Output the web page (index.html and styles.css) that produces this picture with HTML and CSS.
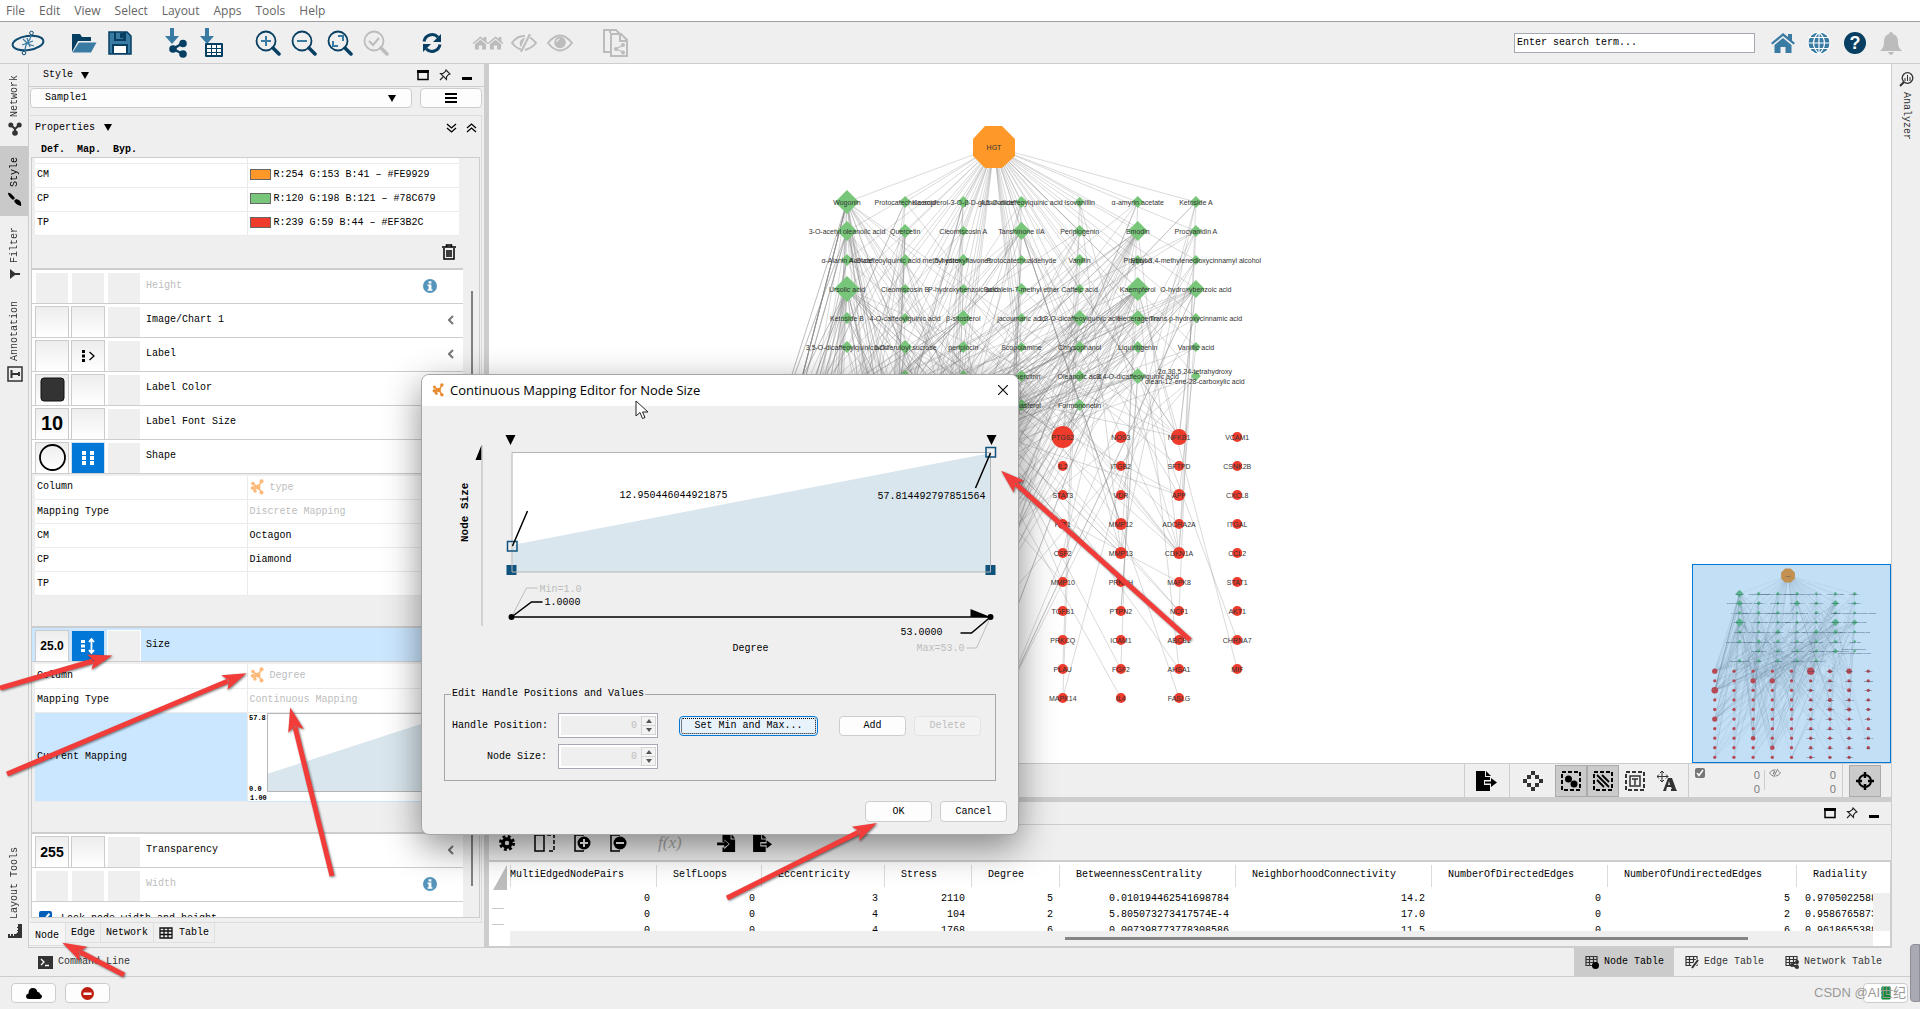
FILE: index.html
```html
<!DOCTYPE html>
<html lang="en">
<head>
<meta charset="utf-8">
<title>Cytoscape</title>
<link rel="stylesheet" href="styles.css">
</head>
<body>
<svg class="defs" aria-hidden="true">
  <symbol id="i-logo" viewBox="0 0 34 26"><ellipse cx="17" cy="13" rx="15.500" ry="7" fill="none" stroke="#0f4a70" stroke-width="2" transform="rotate(-8 17 13)"/><path d="M13 24l2-9 4-6 2-7M12 9l5 5 6 2M11 15l11-4M16 8l3 9" fill="none" stroke="#3a7ba3" stroke-width="1.300"/><circle cx="20.500" cy="3" r="1.800" fill="#efefef" stroke="#0f4a70"/><circle cx="13" cy="23" r="1.800" fill="#efefef" stroke="#0f4a70"/></symbol>
  <symbol id="i-folder" viewBox="0 0 26 22"><path d="M1 2h8l2 3h9v4H7l-6 11z" fill="#073f63"/><path d="M8 10.500h17.500L20 20.500H1.500z" fill="#3a7ba3"/></symbol>
  <symbol id="i-save" viewBox="0 0 24 24"><path d="M1 1h18l4 4v18H1z" fill="#3a7ba3"/><path d="M6 1h12v9H6z" fill="#073f63"/><path d="M8 1h7v7H8z" fill="#3a7ba3"/><path d="M12 2h3v5h-3z" fill="#073f63"/><path d="M4 13h16v10H4z" fill="#073f63"/><path d="M6 15h12v7H6z" fill="#fff"/><path d="M1 1h18l4 4v18H1z" fill="none" stroke="#073f63" stroke-width="1.500"/></symbol>
  <symbol id="i-impnet" viewBox="0 0 24 30"><path d="M6 0h4v8h5l-7 8-7-8h5z" fill="#3a7ba3"/><path d="M19 15L9 21l10 5" stroke="#073f63" stroke-width="2.500" fill="none"/><circle cx="19" cy="15.500" r="3.800" fill="#073f63"/><circle cx="9" cy="21" r="3.800" fill="#073f63"/><circle cx="19" cy="26" r="3.800" fill="#073f63"/></symbol>
  <symbol id="i-imptab" viewBox="0 0 24 30"><path d="M5 0h4v8h5l-7 8-7-8h5z" fill="#3a7ba3"/><rect x="5" y="15" width="18" height="14" rx="1" fill="#073f63"/><path d="M7 17h4v3H7zM12 17h4v3h-4zM17 17h4v3h-4zM7 21h4v3H7zM12 21h4v3h-4zM17 21h4v3h-4zM7 25h4v2H7zM12 25h4v2h-4zM17 25h4v2h-4z" fill="#fff"/></symbol>
  <symbol id="i-lens" viewBox="0 0 26 26"><circle cx="11" cy="11" r="9.500" fill="none" stroke="currentColor" stroke-width="1.800"/><path d="M18 18l6 6" stroke="currentColor" stroke-width="3.500" stroke-linecap="round"/></symbol>
  <symbol id="i-refresh" viewBox="0 0 20 20"><path d="M2 8.500A8.200 8.200 0 0 1 16 4.200M18 11.500A8.200 8.200 0 0 1 4 15.800" fill="none" stroke="#073f63" stroke-width="3"/><path d="M19 1v8h-8zM1 19v-8h8z" fill="#073f63"/></symbol>
  <symbol id="i-home" viewBox="0 0 26 22"><path d="M13 1l-12 10 1.500 1.500L13 4l10.500 8.500L25 11l-3-2.500V2h-4v3z" fill="currentColor"/><path d="M13 6l8.500 7v8h-6v-6h-5v6h-6v-8z" fill="currentColor"/></symbol>
  <symbol id="i-eye" viewBox="0 0 26 18"><path d="M1 9Q13-6 25 9Q13 24 1 9z" fill="none" stroke="currentColor" stroke-width="2"/><circle cx="13" cy="8.500" r="5.800" fill="currentColor"/><path d="M9.500 8a4 4 0 0 1 3-3" stroke="#efefef" fill="none" stroke-width="1.200"/></symbol>
  <symbol id="i-eyeoff" viewBox="0 0 26 18"><path d="M10 15.500Q5 14 1 9Q6 1.500 14 2M19 3.500q3 2 6 5.500q-4 5-11 7" fill="none" stroke="currentColor" stroke-width="2"/><path d="M14 4a5.500 5.500 0 0 0-4 9z" fill="currentColor"/><path d="M19 0L10 18" stroke="currentColor" stroke-width="2"/></symbol>
  <symbol id="i-copy" viewBox="0 0 26 28"><path d="M7 4V1H1v22h6M7 1h6l5 5" fill="none" stroke="currentColor" stroke-width="2"/><path d="M8 5h10l6 6v16H8z" fill="none" stroke="currentColor" stroke-width="2"/><path d="M17 5v7h7" fill="none" stroke="currentColor" stroke-width="2"/><path d="M20 16l-7 4 7 3" fill="none" stroke="currentColor" stroke-width="1.300"/><circle cx="20" cy="16" r="2" fill="currentColor"/><circle cx="13" cy="20" r="2" fill="currentColor"/><circle cx="20" cy="23.500" r="2" fill="currentColor"/></symbol>
  <symbol id="i-globe" viewBox="0 0 24 24"><circle cx="12" cy="12" r="11.500" fill="#fff"/><circle cx="12" cy="12" r="10.500" fill="#3a7ba3"/><path d="M12 1v22M1 12h22M3 6.500h18M3 17.500h18M12 1q-11 11 0 22q11-11 0-22" stroke="#fff" stroke-width="1.200" fill="none"/></symbol>
  <symbol id="i-bell" viewBox="0 0 24 24"><path d="M12 1q2 0 2 2q5 1 5 8q0 6 4 9H1q4-3 4-9q0-7 5-8q0-2 2-2z" fill="#bcbcbc"/><path d="M9 21h6q-1 3-3 3t-3-3" fill="#bcbcbc"/></symbol>
  <symbol id="i-float" viewBox="0 0 12 12"><path d="M1 2.500h10v8H1z" fill="none" stroke="#000" stroke-width="1.500"/><path d="M0 1h12v3H0z"/></symbol>
  <symbol id="i-pin" viewBox="0 0 12 12"><path d="M7 1l4 4-1.500.5-2 2.500v2.500l-6-6H4L6.500 2.500zM4 8l-3 3" fill="none" stroke="#222" stroke-width="1.100"/></symbol>
  <symbol id="i-min" viewBox="0 0 12 12"><path d="M1 8h10v3H1z"/></symbol>
  <symbol id="i-trash" viewBox="0 0 14 16"><path d="M0 3h14M4.500 3V1h5v2M2 4v11h10V4M5 6v7M7 6v7M9 6v7" fill="none" stroke="#000" stroke-width="1.500"/></symbol>
  <symbol id="i-info" viewBox="0 0 14 14"><circle cx="7" cy="7" r="7" fill="#5595bb"/><path d="M5.600 2.200h2.800v2.200H5.600zM4.600 5.500h3.800v4.800h1v1.500H4.600v-1.500h1V7h-1z" fill="#fff"/></symbol>
  <symbol id="i-chev" viewBox="0 0 6 10"><path d="M5 1L1 5l4 4" fill="none" stroke="#777" stroke-width="2"/></symbol>
  <symbol id="i-cyto" viewBox="0 0 14 16"><path d="M3 5l5 3 4-6M3 11l5-3 4 6M2 8h6" stroke="currentColor" stroke-width="1.600" fill="none"/><circle cx="8" cy="8" r="2.500" fill="currentColor"/><circle cx="3" cy="4.500" r="1.800" fill="currentColor"/><circle cx="11.500" cy="2.200" r="2" fill="currentColor"/><circle cx="2.500" cy="9" r="1.800" fill="currentColor"/><circle cx="5" cy="12" r="1.700" fill="currentColor"/><circle cx="11.500" cy="13.500" r="2" fill="currentColor"/></symbol>
  <symbol id="i-grid" viewBox="0 0 14 12"><path d="M1 1h12v10H1zM1 4h12M1 7.500h12M5 1v10M9 1v10" fill="none" stroke="#111" stroke-width="1.300"/></symbol>
  <symbol id="i-tgrid" viewBox="0 0 14 14"><path d="M1 1.500h11v9H1zM1 4.500h11M1 7.500h11M4.500 1v9M8.500 1v9" fill="none" stroke="#333" stroke-width="1.200"/></symbol>
  <symbol id="i-export" viewBox="0 0 22 20"><path d="M0 0h9v6h5v3H8v5h6v6H0z"/><path d="M10 0l5 5h-5z"/><path d="M9 10.500h6V7l6 4.500-6 4.500v-3.500H9z"/></symbol>
  <symbol id="i-import" viewBox="0 0 22 20"><path d="M6 0h9v6h5v14H6v-5h2v2l6-6-6-5v3H6z"/><path d="M16 0l4 5h-4z"/><path d="M0 9.500h8V7l5 4-5 4v-2.500H0z"/></symbol>
</svg>

<nav class="menubar">
  <button>File</button><button>Edit</button><button>View</button><button>Select</button><button>Layout</button><button>Apps</button><button>Tools</button><button>Help</button>
</nav>

<header class="toolbar">
  <div class="group"><button aria-label="Session"><svg width="34" height="26"><use href="#i-logo"/></svg></button></div>
  <div class="group">
    <button aria-label="Open"><svg width="26" height="22"><use href="#i-folder"/></svg></button>
    <button aria-label="Save"><svg width="24" height="24"><use href="#i-save"/></svg></button>
  </div>
  <div class="group">
    <button aria-label="Import network"><svg width="24" height="30"><use href="#i-impnet"/></svg></button>
    <button aria-label="Import table"><svg width="24" height="30"><use href="#i-imptab"/></svg></button>
  </div>
  <div class="group navy">
    <button aria-label="Zoom in"><svg width="26" height="26"><use href="#i-lens"/><path d="M6 11h10M11 6v10" stroke="#3a7ba3" stroke-width="2"/></svg></button>
    <button aria-label="Zoom out"><svg width="26" height="26"><use href="#i-lens"/><path d="M6 11h10" stroke="#3a7ba3" stroke-width="2"/></svg></button>
    <button aria-label="Fit"><svg width="26" height="26"><use href="#i-lens"/><path d="M11 6h5v5M6 11v5h5" stroke="#3a7ba3" stroke-width="2" fill="none"/></svg></button>
    <button aria-label="Fit selected" class="off"><svg width="26" height="26"><use href="#i-lens"/><path d="M6 11l4 4 6-7" stroke="#bcbcbc" stroke-width="2" fill="none"/></svg></button>
  </div>
  <div class="group"><button aria-label="Refresh"><svg width="20" height="20"><use href="#i-refresh"/></svg></button></div>
  <div class="group off">
    <button aria-label="First neighbours"><svg width="32" height="16"><use href="#i-home" width="17" height="16"/><use href="#i-home" x="15" width="17" height="16"/></svg></button>
    <button aria-label="Hide"><svg width="26" height="18"><use href="#i-eyeoff"/></svg></button>
    <button aria-label="Show"><svg width="26" height="18"><use href="#i-eye"/></svg></button>
  </div>
  <div class="group off"><button aria-label="New network from selection"><svg width="26" height="28"><use href="#i-copy"/></svg></button></div>
  <input class="search" type="text" value="Enter search term..." aria-label="Search">
  <div class="group blue">
    <button aria-label="Home"><svg width="26" height="22"><use href="#i-home"/></svg></button>
    <button aria-label="Web"><svg width="24" height="24"><use href="#i-globe"/></svg></button>
    <button aria-label="Help" class="help"><span>?</span></button>
    <button aria-label="Notifications"><svg width="24" height="24"><use href="#i-bell"/></svg></button>
  </div>
</header>

<main class="work">
  <aside class="rail">
    <button><svg width="14" height="14" viewBox="0 0 14 14"><path d="M3 3l4 4 4-4M7 6v5" stroke="#333" stroke-width="2" fill="none"/><circle cx="2.800" cy="3" r="2.500" fill="#333"/><circle cx="11.200" cy="3" r="2.500" fill="#333"/><circle cx="7" cy="11" r="2.800" fill="#333"/></svg>Network</button>
    <button class="on"><svg width="14" height="14" viewBox="0 0 14 14"><path d="M0 1q2-1 7 5L5 8Q0 4 0 1zM8 7q6 1 5 7q-5-1-7-5z" fill="#000"/></svg>Style</button>
    <button><svg width="12" height="12" viewBox="0 0 12 12"><path d="M1 1v10l5-4h5V5H6z" fill="#333"/></svg>Filter</button>
    <button><svg width="16" height="16" viewBox="0 0 16 16"><path d="M1 1h14v14H1z" fill="none" stroke="#333" stroke-width="1.500"/><path d="M4.500 4v8M4 8h8M12 6v4" stroke="#333" stroke-width="2"/></svg>Annotation</button>
    <button class="last"><svg width="14" height="14" viewBox="0 0 14 14"><path d="M14 0v14H0v-4h2v2h1v-2h2v2h1v-2h2l2-2V7H9V6h1V4H9V3h1V0z" fill="#333"/></svg>Layout Tools</button>
  </aside>

  <section class="panel">
    <div class="phead"><span>Style</span><i class="tri"></i><span class="sp"></span>
      <button aria-label="Float"><svg width="12" height="12"><use href="#i-float"/></svg></button><button aria-label="Pin"><svg width="12" height="12"><use href="#i-pin"/></svg></button><button aria-label="Minimize"><svg width="12" height="12"><use href="#i-min"/></svg></button></div>
    <div class="pick"><div class="selwrap"><select aria-label="Style"><option>Sample1</option></select><i class="tri"></i></div><button class="btn" aria-label="Options"><svg width="12" height="10" viewBox="0 0 12 10"><path d="M0 1h12M0 5h12M0 9h12" stroke="#000" stroke-width="2"/></svg></button></div>
    <div class="props">
      <div class="ptitle"><span>Properties</span><i class="tri"></i><span class="sp"></span>
        <svg width="11" height="10" viewBox="0 0 11 10"><path d="M1 1l4.500 4L10 1M1 5l4.500 4L10 5" fill="none" stroke="#000" stroke-width="1.300"/></svg>
        <svg width="11" height="10" viewBox="0 0 11 10"><path d="M1 5l4.500-4L10 5M1 9l4.500-4L10 9" fill="none" stroke="#000" stroke-width="1.300"/></svg></div>
      <div class="pcols"><b>Def.</b><b>Map.</b><b>Byp.</b></div>
      <div class="scroll">
        <div class="list">
          <div class="detail first">
            <table>
              <tr class="stub"><td></td><td></td></tr>
              <tr><td>CM</td><td><i class="sw orange"></i>R:254 G:153 B:41 – #FE9929</td></tr>
              <tr><td>CP</td><td><i class="sw green"></i>R:120 G:198 B:121 – #78C679</td></tr>
              <tr><td>TP</td><td><i class="sw red"></i>R:239 G:59 B:44 – #EF3B2C</td></tr>
            </table>
            <div class="dfoot"><button aria-label="Remove mapping"><svg width="14" height="16"><use href="#i-trash"/></svg></button></div>
          </div>
          <div class="row dim"><i class="c"></i><i class="c"></i><i class="c"></i><span>Height</span><svg class="info" width="14" height="14"><use href="#i-info"/></svg></div>
          <div class="row"><button class="c up" aria-label="Default"></button><button class="c up" aria-label="Mapping"></button><i class="c"></i><span>Image/Chart 1</span><svg class="chev" width="6" height="10"><use href="#i-chev"/></svg></div>
          <div class="row"><button class="c up" aria-label="Default"></button><button class="c up" aria-label="Mapping"><svg width="14" height="14" viewBox="0 0 14 14"><path d="M1 1h3v3H1zM1 5.500h3v3H1zM1 10h3v3H1z"/><path d="M8.500 3L13 7l-4.500 4" fill="none" stroke="#000" stroke-width="1.300"/></svg></button><i class="c"></i><span>Label</span><svg class="chev" width="6" height="10"><use href="#i-chev"/></svg></div>
          <div class="row"><button class="c up" aria-label="Default"><svg width="25" height="25"><rect x="1" y="1" width="23" height="23" rx="3" fill="#333" stroke="#111"/></svg></button><button class="c up" aria-label="Mapping"></button><i class="c"></i><span>Label Color</span><svg class="chev" width="6" height="10"><use href="#i-chev"/></svg></div>
          <div class="row"><button class="c up big">10</button><button class="c up" aria-label="Mapping"></button><i class="c"></i><span>Label Font Size</span><svg class="chev" width="6" height="10"><use href="#i-chev"/></svg></div>
          <div class="row"><button class="c up" aria-label="Default"><svg width="27" height="27"><circle cx="13.500" cy="13.500" r="12.500" fill="none" stroke="#000" stroke-width="1.800"/></svg></button><button class="c act" aria-label="Mapping"><svg width="12" height="14" viewBox="0 0 12 14"><path d="M0 0h4v4H0zM0 5h4v4H0zM0 10h4v4H0zM8 0h4v4H8zM8 5h4v4H8zM8 10h4v4H8z" fill="#fff"/></svg></button><i class="c"></i><span>Shape</span></div>
          <div class="detail">
            <table>
              <tr><td>Column</td><td class="faint"><svg width="14" height="16"><use href="#i-cyto"/></svg>type</td></tr>
              <tr><td>Mapping Type</td><td class="faint">Discrete Mapping</td></tr>
              <tr><td>CM</td><td>Octagon</td></tr>
              <tr><td>CP</td><td>Diamond</td></tr>
              <tr><td>TP</td><td></td></tr>
            </table>
            <div class="dfoot"></div>
          </div>
          <div class="row sel"><button class="c up num">25.0</button><button class="c act" aria-label="Mapping"><svg width="14" height="16" viewBox="0 0 14 16"><path d="M0 2h4v3H0zM0 6.500h4v3H0zM0 11h4v3H0z" fill="#fff"/><path d="M10.500 2v12M8 4l2.500-3L13 4M8 12l2.500 3L13 12" stroke="#fff" stroke-width="1.800" fill="none"/></svg></button><i class="c"></i><span>Size</span></div>
          <div class="detail">
            <table>
              <tr><td>Column</td><td class="faint"><svg width="14" height="16"><use href="#i-cyto"/></svg>Degree</td></tr>
              <tr><td>Mapping Type</td><td class="faint">Continuous Mapping</td></tr>
              <tr class="cur"><td>Current Mapping</td><td>
                <svg class="mini" width="211" height="88"><path d="M18 61L206 0v78H18z" fill="#d9e6ed"/><path d="M18.500 0.500h188v78h-188z" fill="none" stroke="#b5b5b5"/><text x="0" y="7">57.8</text><text x="0" y="78">0.0</text><text x="1" y="87">1.00</text></svg></td></tr>
            </table>
            <div class="dfoot"></div>
          </div>
          <div class="row"><button class="c up mid">255</button><button class="c up" aria-label="Mapping"></button><i class="c"></i><span>Transparency</span><svg class="chev" width="6" height="10"><use href="#i-chev"/></svg></div>
          <div class="row dim"><i class="c"></i><i class="c"></i><i class="c"></i><span>Width</span><svg class="info" width="14" height="14"><use href="#i-info"/></svg></div>
          <div class="row lock"><input type="checkbox" id="lock" checked><label for="lock">Lock node width and height</label></div>
        </div>
        <i class="thumb"></i>
      </div>
    </div>
    <div class="ptabs"><button class="on">Node</button><button>Edge</button><button>Network</button><button><svg width="14" height="12"><use href="#i-grid"/></svg>Table</button></div>
  </section>

  <section class="right">
    <div class="canvas">
      <svg id="view"><g id="net" transform="translate(-489 -64)"></g></svg>
      <svg class="bird" width="199" height="199"><g transform="translate(-232 -37) scale(.33)"><use href="#net" x="489" y="64"/></g><rect width="199" height="199" fill="#0078d7" fill-opacity=".235"/></svg>
    </div>
    <div class="nbar">
      <div class="cellbox"><button aria-label="Export"><svg width="22" height="20"><use href="#i-export"/></svg></button></div>
      <div class="cellbox tools">
        <button aria-label="Detail"><svg width="20" height="20" viewBox="0 0 20 20"><path d="M8 0h4v4H8zM4 4h4v4H4zM12 4h4v4h-4zM0 8h4v4H0zM16 8h4v4h-4zM4 12h4v4H4zM12 12h4v4h-4zM8 16h4v4H8z" fill="#333"/></svg></button>
        <button class="on" aria-label="Select nodes"><svg width="20" height="20" viewBox="0 0 20 20"><path d="M1 1h18v18H1z" fill="none" stroke="#000" stroke-width="2" stroke-dasharray="4 2"/><circle cx="7.500" cy="8" r="3.500"/><circle cx="13" cy="13" r="3.500"/></svg></button>
        <button class="on" aria-label="Select edges"><svg width="20" height="20" viewBox="0 0 20 20"><path d="M1 1h18v18H1z" fill="none" stroke="#000" stroke-width="2" stroke-dasharray="4 2"/><path d="M4 4l12 12M4 9l7 7M9 4l7 7" stroke="#000" stroke-width="1.800"/></svg></button>
        <button aria-label="Select annotations"><svg width="20" height="20" viewBox="0 0 20 20"><path d="M1 1h18v18H1z" fill="none" stroke="#333" stroke-width="2" stroke-dasharray="4 2"/><path d="M5 5h10v10H5zM7 8h6M10 8v6" fill="none" stroke="#333" stroke-width="1.500"/></svg></button>
        <button aria-label="Labels"><svg width="20" height="20" viewBox="0 0 20 20"><path d="M5 0v11M0 5.500h11M3 2l2-2 2 2M3 9l2 2 2-2M2 3.500l-2 2 2 2M9 3.500l2 2-2 2" fill="none" stroke="#333"/><path d="M6 20l5-13h4l4 11 1 2h-6v-2h1l-1-2h-4l-1 4zM11 14h2l-1-4z" fill="#333"/></svg></button>
      </div>
      <div class="cellbox counts">
        <svg width="10" height="10" viewBox="0 0 10 10"><rect width="10" height="10" rx="2" fill="#777"/><path d="M2 5l2 2.500L8 2" stroke="#fff" stroke-width="1.500" fill="none"/></svg><p>0<br>0</p><i class="vline"></i>
        <svg width="12" height="10"><use href="#i-eyeoff"/></svg><p>0<br>0</p>
      </div>
      <div class="cellbox tools"><button class="on" aria-label="Bird's eye view"><svg width="18" height="18" viewBox="0 0 18 18"><circle cx="9" cy="9" r="6" fill="none" stroke="#000" stroke-width="2"/><path d="M9 0v6M9 12v6M0 9h6M12 9h6" stroke="#000" stroke-width="2.500"/></svg></button></div>
    </div>
    <div class="tpanel">
      <div class="phead"><span class="sp"></span><button aria-label="Float"><svg width="12" height="12"><use href="#i-float"/></svg></button><button aria-label="Pin"><svg width="12" height="12"><use href="#i-pin"/></svg></button><button aria-label="Minimize"><svg width="12" height="12"><use href="#i-min"/></svg></button></div>
      <div class="tbar">
        <button aria-label="Settings"><svg width="16" height="16" viewBox="0 0 16 16"><circle cx="8" cy="8" r="6.500" fill="none" stroke="#000" stroke-width="3" stroke-dasharray="2.800 2.300"/><circle cx="8" cy="8" r="4" fill="none" stroke="#000" stroke-width="3.500"/></svg></button>
        <button aria-label="Columns"><svg width="21" height="18" viewBox="0 0 21 18"><path d="M1 1h9v16H1z" fill="none" stroke="#000" stroke-width="1.500"/><path d="M13 1h7v16h-7" fill="none" stroke="#000" stroke-width="1.500" stroke-dasharray="4 2"/></svg></button>
        <button aria-label="Add column"><svg width="17" height="18" viewBox="0 0 17 18"><path d="M10 1H1v16h9" fill="none" stroke="#000" stroke-width="1.500"/><circle cx="10" cy="9" r="6.500"/><path d="M6 9h8M10 5v8" stroke="#fff" stroke-width="2"/></svg></button>
        <button aria-label="Delete column"><svg width="17" height="18" viewBox="0 0 17 18"><path d="M10 1H1v16h9" fill="none" stroke="#000" stroke-width="1.500"/><circle cx="10" cy="9" r="6.500"/><path d="M6 9h8" stroke="#fff" stroke-width="2"/></svg></button>
        <button class="fx">f(x)</button>
        <div class="io">
          <button aria-label="Import table"><svg width="20" height="18"><use href="#i-import"/></svg></button>
          <button aria-label="Export table"><svg width="22" height="18"><use href="#i-export"/></svg></button>
        </div>
      </div>
      <div class="tgrid">
        <div class="gut"><svg width="21" height="69"><path d="M4 28L18 3v25z" fill="#bdbdbd"/><path d="M3 46.500h12M3 62.500h12" stroke="#c8c8c8"/></svg></div>
        <div class="twrap">
          <table class="data">
            <colgroup><col style="width:146px"><col style="width:105px"><col style="width:123px"><col style="width:87px"><col style="width:88px"><col style="width:176px"><col style="width:196px"><col style="width:176px"><col style="width:189px"><col></colgroup>
            <thead><tr><th class="cut">MultiEdgedNodePairs</th><th>SelfLoops</th><th>Eccentricity</th><th>Stress</th><th>Degree</th><th>BetweennessCentrality</th><th>NeighborhoodConnectivity</th><th>NumberOfDirectedEdges</th><th>NumberOfUndirectedEdges</th><th>Radiality</th></tr></thead>
            <tbody>
              <tr><td>0</td><td>0</td><td>3</td><td>2110</td><td>5</td><td>0.010194462541698784</td><td>14.2</td><td>0</td><td>5</td><td>0.9705022588</td></tr>
              <tr><td>0</td><td>0</td><td>4</td><td>104</td><td>2</td><td>5.805073273417574E-4</td><td>17.0</td><td>0</td><td>2</td><td>0.9586765873</td></tr>
              <tr><td>0</td><td>0</td><td>4</td><td>1768</td><td>6</td><td>0.007398773778308586</td><td>11.5</td><td>0</td><td>6</td><td>0.9618655388</td></tr>
            </tbody>
          </table>
        </div>
        <div class="vs"></div>
        <div class="gut"></div><div class="hs"><i></i></div><div></div>
      </div>
    </div>
  </section>

  <aside class="rail rrail"><button><svg width="15" height="15" viewBox="0 0 15 15"><circle cx="8.500" cy="6" r="5.300" fill="none" stroke="#333" stroke-width="1.300"/><path d="M5 10l-4 4" stroke="#333" stroke-width="2"/><path d="M6 6v3M8.500 3v6M11 5v4" stroke="#333"/></svg>Analyzer</button></aside>
</main>

<nav class="bottom">
  <button class="cmd"><svg width="15" height="13" viewBox="0 0 15 13"><rect width="15" height="13" fill="#333"/><path d="M3 3l3 3-3 3M7 9.500h4" stroke="#fff" stroke-width="1.300" fill="none"/></svg>Command Line</button>
  <span class="sp"></span>
  <button class="on"><svg width="14" height="14"><use href="#i-tgrid"/><circle cx="10.500" cy="10.500" r="3.500"/></svg>Node Table</button>
  <button><svg width="14" height="14"><use href="#i-tgrid"/><path d="M7 13l6-8" stroke="#efefef" stroke-width="4"/><path d="M7 13l6-8" stroke="#333" stroke-width="2"/></svg>Edge Table</button>
  <button><svg width="14" height="14"><use href="#i-tgrid"/><path d="M12 7l-5 3 5 3" stroke="#333" stroke-width="1.300" fill="none"/><circle cx="12" cy="7" r="2" fill="#333"/><circle cx="7" cy="10" r="2" fill="#333"/><circle cx="12" cy="12" r="2" fill="#333"/></svg>Network Table</button>
</nav>

<footer class="status">
  <button class="btn" aria-label="Cloud"><svg width="16" height="11" viewBox="0 0 16 11"><path d="M3 11q-3 0-3-3 0-2 2.500-2.500Q2.500 0 7 0q3.500 0 4.500 4Q14 4 14 6q2 .5 2 2.500T13.500 11z"/></svg></button>
  <button class="btn" aria-label="Stop"><svg width="13" height="13" viewBox="0 0 13 13"><circle cx="6.500" cy="6.500" r="6.500" fill="#be1e10"/><path d="M2.500 5.500h8v2.500h-8z" fill="#fff"/></svg></button>
  <span class="sp"></span>
  <button class="btn" aria-label="Memory"><svg width="10" height="14" viewBox="0 0 10 14"><path d="M1 1h8v12H1zM0 3h10M0 7h10M0 11h10" fill="#0f8a34" stroke="#0f8a34"/></svg></button>
</footer>

<dialog class="dlg" open aria-labelledby="dt">
  <div class="dtitle"><svg width="12" height="14"><use href="#i-cyto"/></svg><span id="dt">Continuous Mapping Editor for Node Size</span><span class="sp"></span><button aria-label="Close"><svg width="10" height="10" viewBox="0 0 10 10"><path d="M0 0l10 10M10 0L0 10" stroke="#111" stroke-width="1.200"/></svg></button></div>
  <svg class="chart" viewBox="423 406 595 276" width="595" height="276">
    <path d="M513 453h478v119H513z" fill="#fff"/><path d="M513 545L991 453v119H513z" fill="#d9e6ed"/>
    <path d="M512.500 452.500h478.500v119.500H512.500z" fill="none" stroke="#b5b5b5"/>
    <path d="M506 435h10l-5 10zM987 435h10l-5 10zM476 460l6-15v15zM971 609v8h20z"/>
    <path d="M482.500 445v181" stroke="#b5b5b5"/>
    <path d="M508 541.500h9.500v9.500H508zM986.500 447.500h9.500v9.500h-9.500z" fill="none" stroke="#0f527d" stroke-width="1.500"/>
    <path d="M507 565h10v10h-10zM986 565h10v10h-10z" fill="#0f527d"/><path d="M512.500 565v7h5M991 565v7h-5" stroke="#b5b5b5" fill="none"/>
    <path d="M513 546l15-35M991 453l-15 35M512 617h479M512 617l20-15h11M961 633h11l19-16" fill="none" stroke="#000" stroke-width="1.500"/>
    <path d="M512 617l15-29h11M967 648h10l14-31" fill="none" stroke="#bdbdbd"/>
    <circle cx="512" cy="617" r="3"/><circle cx="991" cy="617" r="3"/>
    <text x="620" y="498">12.950446044921875</text><text x="878" y="499">57.814492797851564</text>
    <text class="g" x="540" y="592">Min=1.0</text><text x="545" y="605">1.0000</text><text x="901" y="635">53.0000</text><text class="g" x="917" y="651">Max=53.0</text>
    <text x="733" y="651">Degree</text><text class="axis" transform="translate(468 542) rotate(-90)">Node Size</text>
  </svg>
  <fieldset>
    <legend>Edit Handle Positions and Values</legend>
    <label for="hp">Handle Position:</label><div class="spin"><input id="hp" type="text" value="0" disabled><i></i></div>
    <button class="btn focus">Set Min and Max...</button><button class="btn add">Add</button><button class="btn" disabled>Delete</button>
    <label for="ns">Node Size:</label><div class="spin"><input id="ns" type="text" value="0" disabled><i></i></div>
  </fieldset>
  <div class="dact"><button class="btn">OK</button><button class="btn">Cancel</button></div>
</dialog>

<svg class="cursor" width="14" height="20" viewBox="0 0 14 20"><path d="M1 1v15l4-3.500 2.500 6 2.500-1-2.500-5.500H13z" fill="#fff" stroke="#222"/></svg>

<svg class="marks" aria-hidden="true">
  <defs><marker id="head" markerUnits="userSpaceOnUse" markerWidth="26" markerHeight="22" refX="4" refY="10" orient="auto"><path d="M0 2L24 10 0 18 5 10z" fill="#f13c3a"/></marker></defs>
  <g stroke="#f13c3a" stroke-width="5">
    <path d="M0 688L93 661" marker-end="url(#head)"/><path d="M7 774L228 681" marker-end="url(#head)"/><path d="M332 876L295 727" marker-end="url(#head)"/>
    <path d="M124 975L80 952" marker-end="url(#head)"/><path d="M727 898L859 832" marker-end="url(#head)"/><path d="M1190 640L1016 484" marker-end="url(#head)"/>
  </g>
</svg>
<i class="edgebar"></i>
<div class="wm">CSDN @AI世纪</div>
<script src="network.js"></script>
</body>
</html>
```
FILE: styles.css
```css
* { box-sizing: border-box; }
body { margin: 0; height: 100vh; display: flex; flex-direction: column; overflow: hidden; background: #efefef; color: #000; font: 10px/16px "Liberation Mono", "Noto Sans CJK SC", monospace; }
button, input, select { font: inherit; color: inherit; margin: 0; }
button { background: none; border: 0; padding: 0; display: flex; align-items: center; justify-content: center; white-space: nowrap; }
svg { display: block; flex: none; }
table { border-collapse: collapse; border-spacing: 0; }
.defs { position: absolute; width: 0; height: 0; }
.sp { flex: 1; }
.tri { border: 4px solid transparent; border-top: 7px solid #000; border-bottom: 0; }
.btn { background: #fdfdfd; border: 1px solid #cdcdcd; border-radius: 4px; height: 20px; }

.menubar { display: flex; gap: 14px; height: 22px; padding-left: 6px; background: #fff; border-bottom: 1px solid #a0a0a0; flex: none; }
.menubar button { font: 12px/20px "Open Sans", sans-serif; color: #666; }

.toolbar { display: flex; align-items: center; gap: 20px; height: 42px; flex: none; padding: 0 11px 0 10px; border-bottom: 1px solid #cdcdcd; }
.group { display: flex; }
.group button { width: 36px; height: 36px; }
.navy { color: #073f63; }
.blue { color: #3a7ba3; margin-left: -10px; }
.off { color: #bcbcbc; }
.search { width: 241px; height: 20px; margin-left: auto; border: 1px solid #a8a8b2; background: #fff; padding: 0 2px; }
.help span { width: 22px; height: 22px; border-radius: 11px; background: #073f63; color: #fff; font: bold 18px/22px "Liberation Sans", sans-serif; }

.work { display: flex; flex: 1; min-height: 0; }
.rail { width: 29px; flex: none; display: flex; flex-direction: column; border-right: 1px solid #cdcdcd; }
.rail button { writing-mode: vertical-rl; transform: rotate(180deg); width: 28px; padding: 10px 2px 11px 0; gap: 5px; color: #333; }
.rail svg { transform: rotate(180deg); }
.rail .on { background: #c9c9c9; color: #000; }
.rail .last { margin-top: auto; }
.rrail { border-right: 0; border-left: 1px solid #cdcdcd; }
.rrail button, .rrail svg { transform: none; }
.rrail button { padding: 8px 0; }

.panel { width: 460px; flex: none; display: flex; flex-direction: column; border-right: 5px solid #cdcdcd; border-bottom: 1px solid #cdcdcd; }
.phead { display: flex; align-items: center; height: 23px; flex: none; padding: 0 6px 0 14px; border-bottom: 1px solid #cdcdcd; }
.phead .tri { margin-left: 8px; }
.phead button { width: 22px; height: 22px; }
.pick { display: flex; gap: 8px; padding: 1px 2px 7px 1px; height: 28px; flex: none; }
.selwrap { flex: 1; display: flex; align-items: center; height: 20px; background: #fdfdfd; border: 1px solid #cdcdcd; border-radius: 4px; padding-right: 15px; }
.selwrap select { flex: 1; appearance: none; border: 0; background: none; padding: 0 14px; height: 18px; }
.pick .btn { width: 62px; }
.props { flex: 1; min-height: 0; display: flex; flex-direction: column; margin: 0 2px 0 1px; border: 1px solid #dcdcdc; border-left: 0; }
.ptitle { display: flex; align-items: center; gap: 9px; height: 23px; padding: 0 4px 0 5px; flex: none; }
.pcols { display: grid; grid-template-columns: 36px 36px 36px; height: 18px; padding: 4px 0 0 11px; line-height: 14px; flex: none; }
.scroll { flex: 1; min-height: 0; overflow: hidden; display: flex; justify-content: space-between; margin: 0 1px 4px 1px; border: 1px solid #cdcdcd; }
.list { width: 431px; }
.thumb { width: 2px; height: 595px; margin: 133px 6px 0 0; background: #808080; flex: none; }
.detail { padding: 2px 4px 0 3px; border-bottom: 2px solid #cdcdcd; }
.detail table { width: 424px; table-layout: fixed; background: #fff; }
.detail td { height: 24px; padding: 0 2px; border-bottom: 1px solid #ebebeb; white-space: nowrap; }
.detail td + td { border-left: 1px solid #ebebeb; }
.detail .stub td { height: 5px; }
.detail td svg { display: inline-block; vertical-align: middle; margin-right: 6px; }
.detail .faint { color: #bdbdbd; }
.faint svg { color: #fdb978; }
.detail .cur td { height: 89px; background: #cbe7ff; }
.detail .cur td + td { background: #fff; padding: 0 0 0 1px; vertical-align: top; border-bottom-color: #cbe7ff; }
.detail .mini { display: block; margin: 0; }
.mini text { font: bold 7px "Liberation Mono", monospace; }
.sw { display: inline-block; width: 21px; height: 11px; border: 1px solid #666; vertical-align: middle; margin-right: 3px; }
.orange { background: #fe9929; } .green { background: #78c679; } .red { background: #ef3b2c; }
.dfoot { height: 30px; display: flex; justify-content: flex-end; align-items: center; }
.detail.first { padding-top: 0; }
.first .dfoot { height: 32px; }
.dfoot button { margin-right: 3px; height: 16px; }
.row { display: flex; align-items: center; gap: 2px; height: 34px; padding-left: 3px; background: #fff; border-bottom: 1px solid #cdcdcd; }
.row > span { flex: 1; padding-left: 3px; }
.row .c { width: 34px; height: 31px; margin-top: 2px; background: #efefef; border: 1px solid #fff; border-bottom: 0; }
.row .up { border-color: #cbcbcb; background: linear-gradient(#ededed, #fff); }
.row .act { background: #0078d7; border: 1px solid #cbe0f2; border-bottom: 0; }
.row.dim { color: #bdbdbd; }
.row.sel { background: #cbe7ff; }
.info { margin-right: 26px; }
.chev { margin-right: 9px; }
.row .big { font: bold 20px "Liberation Sans", sans-serif; }
.row .mid { font: bold 14px "Liberation Sans", sans-serif; }
.row .num { font: bold 12px "Liberation Sans", sans-serif; }
.row.lock { align-items: flex-start; padding: 9px 0 0 7px; gap: 9px; }
.lock input { width: 13px; height: 13px; accent-color: #005fb8; }
.ptabs { display: flex; height: 24px; flex: none; }
.ptabs button { height: 20px; padding: 0 5px; gap: 6px; border: 1px solid #e0e0e0; border-left: 0; border-top: 0; }
.ptabs .on { height: 23px; padding: 3px 6px 0; background: #f5f5f5; }

.right { flex: 1; min-width: 0; display: flex; flex-direction: column; }
.canvas { flex: 1; position: relative; background: #fff; overflow: hidden; border-bottom: 1px solid #cdcdcd; }
#view { position: absolute; width: 100%; height: 100%; }
#net text { font: 7px "Liberation Sans", sans-serif; fill: #333; text-anchor: middle; }
.bird { position: absolute; right: 0; bottom: 0; outline: 1px solid #0078d7; outline-offset: -1px; background: #fff; }
.nbar { display: flex; justify-content: flex-end; height: 33px; flex: none; padding-right: 10px; }
.cellbox { display: flex; align-items: center; border-left: 1px solid #cdcdcd; padding: 0 11px; }
.tools { padding: 0 5px 0 7px; }
.tools:last-child { padding: 0 0 0 6px; }
.tools button { width: 32px; height: 32px; border: 1px solid transparent; }
.tools button:first-child:not(.on) { margin-right: 6px; }
.tools .on { background: #cbcbcb; border-color: #aaa; }
.counts { width: 154px; padding: 4px 6px; align-items: flex-start; color: #777; font: 11px/14px "Open Sans", sans-serif; }
.counts p { margin: 0; flex: 1; text-align: right; }
.vline { width: 1px; height: 20px; margin: 2px 4px; background: #cdcdcd; }
.tpanel { border-top: 5px solid #cdcdcd; flex: none; }
.tbar { display: flex; align-items: center; gap: 19px; height: 35px; padding-left: 10px; }
.fx { font: italic 17px "Liberation Serif", serif; color: #aaa; margin: 0 16px 0 12px; }
.io { display: flex; gap: 15px; }
.tgrid { display: grid; grid-template-columns: 21px minmax(0, 1fr) 17px; grid-template-rows: 69px 15px; border: solid #cdcdcd; border-width: 2px 1px 2px 0; background: #fff; }
.twrap { overflow: hidden; }
.data { width: 100%; table-layout: fixed; }
.data th { height: 29px; padding: 0 0 3px 17px; text-align: left; font-weight: normal; white-space: nowrap; background: linear-gradient(#dcdcdc, #dcdcdc) 0 3px / 1px 22px no-repeat; }
.data th.cut { padding-left: 0; }
.data td { height: 16px; padding: 0 6px 0 0; text-align: right; }
.data td:last-child { text-align: left; padding-left: 9px; }
.vs { background: #efefef; margin-top: 31px; }
.hs { background: #efefef; padding: 6px 125px 0 555px; }
.hs i { display: block; height: 3px; background: #858585; }

.bottom { display: flex; height: 29px; flex: none; padding-right: 28px; border-bottom: 1px solid #cdcdcd; }
.bottom button { gap: 5px; padding: 0 10px 0 11px; color: #333; }
.bottom .on { background: #cbcbcb; color: #000; }
.bottom .cmd { padding-left: 38px; }
.status { display: flex; gap: 9px; align-items: center; height: 32px; flex: none; padding: 0 12px 0 11px; }
.status .btn { width: 45px; }

.dlg { position: absolute; left: 421px; top: 374px; margin: 0; width: 598px; padding: 0 0 12px; border: 1px solid #a5a5a5; border-radius: 8px; background: #efefef; color: #000; box-shadow: 0 12px 36px rgba(0, 0, 0, .45); overflow: hidden; }
.dtitle { display: flex; align-items: center; gap: 6px; height: 31px; padding: 0 10px 2px; background: #fff; font: 13px/20px "Open Sans", sans-serif; }
.dtitle svg { color: #e88a2e; }
.chart { width: 100%; }
.chart text { font: 10px "Liberation Mono", monospace; }
.chart .g { fill: #bdbdbd; }
.chart .axis { font: bold 11px "Liberation Mono", monospace; }
fieldset { display: grid; grid-template-columns: 98px 100px 139px 67px 67px; column-gap: 8px; row-gap: 6px; align-items: center; margin: 4px 22px 0; padding: 11px 8px 11px 7px; border: 1px solid #a5a5a5; }
legend { padding: 0 1px; margin-left: -1px; }
fieldset label { text-align: right; white-space: nowrap; padding-right: 3px; }
fieldset .focus { background: #e8f2fb; border-color: #0078d7; outline: 1px dotted #000; outline-offset: -3px; margin-left: 13px; width: 139px; }
fieldset .btn:nth-of-type(n+2) { margin-left: 26px; width: 67px; }
fieldset .btn:disabled { border-color: #e4e4e4; background: #f3f3f3; color: #bdbdbd; }
.spin { display: flex; height: 25px; padding: 2px 1px 2px 2px; border: 1px solid #a8a8b2; background: #fff; }
.spin input { flex: 1; min-width: 0; border: 0; background: #efefef; color: #bdbdbd; text-align: right; padding: 0 4px; }
.spin i { width: 15px; border: 1px solid #d5d5d5; background: linear-gradient(#d5d5d5, #d5d5d5) 0 50% / 100% 1px no-repeat #f3f3f3; display: flex; flex-direction: column; align-items: center; justify-content: space-around; }
.spin i::before, .spin i::after { content: ""; border: 3px solid transparent; border-top: 0; border-bottom: 4px solid #555; }
.spin i::after { border-bottom: 0; border-top: 4px solid #555; }
.dact { display: flex; justify-content: flex-end; gap: 8px; padding: 20px 11px 0; }
.dact .btn { width: 67px; height: 21px; }

.cursor { position: absolute; left: 635px; top: 400px; }
.marks { position: absolute; inset: 0; width: 100%; height: 100%; pointer-events: none; filter: drop-shadow(1px 1px 1px rgba(0, 0, 0, .5)); }
.edgebar { position: absolute; right: 0; bottom: 7px; width: 10px; height: 58px; border-radius: 4px 0 0 4px; background: #a9a9b2; border: 1px solid #8e8e98; }
.wm { position: absolute; right: 14px; bottom: 6px; font: 13px/20px "Liberation Sans", "Noto Sans CJK SC", sans-serif; color: #999; }
```
FILE: network.js
```js
const NS = 'http://www.w3.org/2000/svg';
const net = document.getElementById('net');
const add = (tag, attrs, text) => {
  const el = document.createElementNS(NS, tag);
  for (const k in attrs) el.setAttribute(k, attrs[k]);
  if (text) el.textContent = text;
  net.appendChild(el);
};
let seed = 29;
const rnd = () => (seed = (seed * 16807) % 2147483647) / 2147483647;

const compounds = [
  [['Wogonin', 12], ['Protocatechuic acid', 6], ['Kaempferol-3-O-β-D-glucuronide', 6], ['4,5-O-dicaffeoylquinic acid', 6], ['Isovanillin', 5], ['α-amyrin acetate', 6], ['Ketoside A', 6]],
  [['3-O-acetyl oleanolic acid', 10], ['Quercetin', 7], ['Cleomiscosin A', 5], ['Tanshinone IIA', 9], ['Periplogenin', 6], ['Emodin', 10], ['Procyanidin A', 6]],
  [['α-Alanin Acetate', 6], ['4-O-caffeoylquinic acid methyl ester', 6], ['5-hydroxyflavones', 6], ['Protocatechualdehyde', 5], ['Vanillin', 6], ['Physcion', 5], ['Ethyl-3,4-methylenedioxycinnamyl alcohol', 5]],
  [['Ursolic acid', 13], ['Cleomiscosin B', 5], ['P-hydroxybenzoic acid', 5], ['Baicalein-7-methyl ether', 6], ['Caffeic acid', 5], ['Kaempferol', 12], ['O-hydroxybenzoic acid', 9]],
  [['Ketoside B', 6], ['4-O-caffeoylquinic acid', 5], ['β-sitosterol', 8], ['jacoumaric acid', 5], ['1,3-O-dicaffeoylquinic acid', 8], ['Hederagenin', 8], ['Trans p-hydroxycinnamic acid', 5]],
  [['3,5-O-dicaffeoylquinic acid', 6], ['6-O-feruloyl sucrose', 7], ['periplocin', 6], ['Scopolamine', 5], ['Chrysophanol', 6], ['Liquiritigenin', 6], ['Vanillic acid', 5]],
  [null, ['Tormentic acid', 6], ['Luteolin', 6], ['Isoquercitrin', 6], ['Oleanolic acid', 6], ['3,4-O-dicaffeoylquinic acid', 8], ['', 5]],
  [['Isochlorogenic acid', 6], ['Rutin', 6], ['Apigenin', 6], ['Stigmasterol', 6], ['Formononetin', 6]],
];
const targets = {
  5: ['PTGS2', 'IL2', 'STAT3', 'FLT1', 'CSF2', 'MMP10', 'TGFB1', 'PRKCQ', 'PLAU', 'MAPK14'],
  6: ['NOS3', 'ITGB2', 'VDR', 'MMP12', 'MMP13', 'PRKCH', 'PTPN2', 'ICAM1', 'FGF2', 'IL4'],
  7: ['NFKB1', 'SFTPD', 'APP', 'ADORA2A', 'CDKN1A', 'MAPK8', 'NCF1', 'ABCB1', 'AHSA1', 'FASLG'],
  8: ['VCAM1', 'CSNK2B', 'CXCL8', 'ITGAL', 'CCL2', 'STAT1', 'AKT1', 'CHRNA7', 'MIF'],
};
const radius = { '0,0': 8, '0,2': 10, '0,5': 8, '2,1': 8, '3,1': 8, '5,0': 11, '7,0': 8, '2,7': 7, '3,8': 7, '6,0': 6, '7,2': 6, '6,3': 6, '6,4': 6, '7,4': 6 };

const greens = [];
compounds.forEach((row, r) => row.forEach((c, k) => c && greens.push({ x: 847 + 58.15 * k, y: 202 + 29 * r, label: c[0], h: c[1], last: r === 6 && k === 6 })));
const reds = [];
for (let k = 0; k < 9; k++) for (let r = 0; r < (k === 8 ? 9 : 10); r++) {
  const s = radius[k + ',' + r] || 5;
  const w = k === 8 ? 0.15 : k > 4 ? 0.4 : 1;
  reds.push({ x: 772 + 58.15 * k, y: 437 + 29 * r, label: (targets[k] || [])[r], s, w: w * (s === 5 ? 1 : s * s / 12) });
}
const total = reds.reduce((a, t) => a + t.w, 0);
const pick = () => { let v = rnd() * total; for (const t of reds) if ((v -= t.w) <= 0) return t; return reds[0]; };

const edge = (x1, y1, x2, y2) => add('path', { d: `M${x1} ${y1}L${x2} ${y2}`, stroke: '#848484', 'stroke-opacity': 0.38, 'stroke-width': 0.8 });
for (const g of greens) {
  edge(994, 147, g.x, g.y);
  const n = Math.round(Math.pow(g.h - 4, 1.55)) + 2;
  for (let i = 0; i < n; i++) { const t = pick(); edge(g.x, g.y, t.x, t.y); }
}
add('path', { d: 'M985 126h17l13 13v17l-13 12h-17l-12-12v-17z', fill: '#fe9929' });
for (const g of greens) add('path', { d: `M${g.x} ${g.y - g.h}l${g.h} ${g.h}l${-g.h} ${g.h}l${-g.h} ${-g.h}z`, fill: '#78c679' });
for (const t of reds) add('circle', { cx: t.x, cy: t.y, r: t.s, fill: '#ef3b2c' });
add('text', { x: 994, y: 150 }, 'HGT');
for (const g of greens) {
  if (g.last) {
    add('text', { x: g.x - 1, y: g.y - 2 }, '2α,3β,5,24-tetrahydroxy');
    add('text', { x: g.x - 1, y: g.y + 8 }, 'olean-12-ene-28-carboxylic acid');
  } else add('text', { x: g.x, y: g.y + 3 }, g.label);
}
for (const t of reds) if (t.label) add('text', { x: t.x, y: t.y + 3 }, t.label);
```
